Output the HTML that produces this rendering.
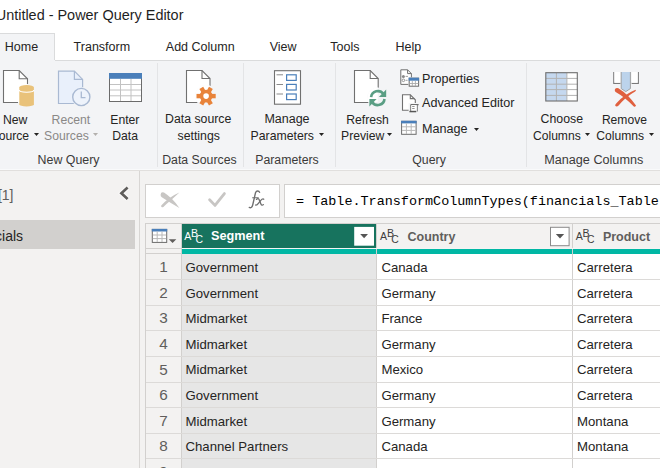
<!DOCTYPE html>
<html><head><meta charset="utf-8"><style>
html,body{margin:0;padding:0;width:660px;height:468px;overflow:hidden;position:relative;background:#f3f2f1}
</style></head><body>
<div style="position:absolute;left:0px;top:0px;width:660px;height:60px;background:#fff"></div>
<div style="position:absolute;left:-4.3px;top:8.17px;font:400 14.45px/14.45px 'Liberation Sans', sans-serif;color:#1f1f1f;white-space:pre;">Untitled - Power Query Editor</div>
<div style="position:absolute;left:-1px;top:33px;width:56px;height:28px;background:#f3f4f6;border:1px solid #dadbdc;border-bottom:none;box-sizing:border-box"></div>
<div style="position:absolute;left:4.8px;top:41.12px;font:400 12.5px/12.5px 'Liberation Sans', sans-serif;color:#252423;white-space:pre;">Home</div>
<div style="position:absolute;left:73.6px;top:41.12px;font:400 12.5px/12.5px 'Liberation Sans', sans-serif;color:#252423;white-space:pre;">Transform</div>
<div style="position:absolute;left:165.8px;top:41.12px;font:400 12.5px/12.5px 'Liberation Sans', sans-serif;color:#252423;white-space:pre;">Add Column</div>
<div style="position:absolute;left:269.7px;top:41.12px;font:400 12.5px/12.5px 'Liberation Sans', sans-serif;color:#252423;white-space:pre;">View</div>
<div style="position:absolute;left:330.3px;top:41.12px;font:400 12.5px/12.5px 'Liberation Sans', sans-serif;color:#252423;white-space:pre;">Tools</div>
<div style="position:absolute;left:395.5px;top:41.12px;font:400 12.5px/12.5px 'Liberation Sans', sans-serif;color:#252423;white-space:pre;">Help</div>
<div style="position:absolute;left:0px;top:60px;width:660px;height:109px;background:#f3f4f6"></div>
<div style="position:absolute;left:55px;top:60px;width:605px;height:1px;background:#dadbdc"></div>
<div style="position:absolute;left:0px;top:169px;width:660px;height:1px;background:#f9fafb"></div>
<div style="position:absolute;left:0px;top:170px;width:660px;height:1px;background:#e1dfdd"></div>
<div style="position:absolute;left:157px;top:63px;width:1px;height:104px;background:#e3e4e6"></div>
<div style="position:absolute;left:243px;top:63px;width:1px;height:104px;background:#e3e4e6"></div>
<div style="position:absolute;left:335px;top:63px;width:1px;height:104px;background:#e3e4e6"></div>
<div style="position:absolute;left:526px;top:63px;width:1px;height:104px;background:#e3e4e6"></div>
<!--ICONS-->
<div style="position:absolute;left:2.9px;top:113.57px;font:400 12.2px/12.2px 'Liberation Sans', sans-serif;color:#252423;white-space:pre;">New</div>
<div style="position:absolute;left:-9.5px;top:129.87px;font:400 12.2px/12.2px 'Liberation Sans', sans-serif;color:#252423;white-space:pre;">Source</div>
<div style="position:absolute;left:51.6px;top:113.57px;font:400 12.2px/12.2px 'Liberation Sans', sans-serif;color:#8a8886;white-space:pre;">Recent</div>
<div style="position:absolute;left:44.1px;top:129.87px;font:400 12.2px/12.2px 'Liberation Sans', sans-serif;color:#8a8886;white-space:pre;">Sources</div>
<div style="position:absolute;left:110.3px;top:113.57px;font:400 12.2px/12.2px 'Liberation Sans', sans-serif;color:#252423;white-space:pre;">Enter</div>
<div style="position:absolute;left:112.2px;top:129.87px;font:400 12.2px/12.2px 'Liberation Sans', sans-serif;color:#252423;white-space:pre;">Data</div>
<div style="position:absolute;left:37.6px;top:153.90px;font:400 12.4px/12.4px 'Liberation Sans', sans-serif;color:#3b3a39;white-space:pre;">New Query</div>
<div style="position:absolute;left:165px;top:113.49px;font:400 12.3px/12.3px 'Liberation Sans', sans-serif;color:#252423;white-space:pre;">Data source</div>
<div style="position:absolute;left:177.5px;top:129.79px;font:400 12.3px/12.3px 'Liberation Sans', sans-serif;color:#252423;white-space:pre;">settings</div>
<div style="position:absolute;left:162.2px;top:153.99px;font:400 12.3px/12.3px 'Liberation Sans', sans-serif;color:#3b3a39;white-space:pre;">Data Sources</div>
<div style="position:absolute;left:264.4px;top:113.32px;font:400 12.5px/12.5px 'Liberation Sans', sans-serif;color:#252423;white-space:pre;">Manage</div>
<div style="position:absolute;left:250.6px;top:129.83px;font:400 12.25px/12.25px 'Liberation Sans', sans-serif;color:#252423;white-space:pre;">Parameters</div>
<div style="position:absolute;left:255.2px;top:153.99px;font:400 12.3px/12.3px 'Liberation Sans', sans-serif;color:#3b3a39;white-space:pre;">Parameters</div>
<div style="position:absolute;left:346.2px;top:113.57px;font:400 12.2px/12.2px 'Liberation Sans', sans-serif;color:#252423;white-space:pre;">Refresh</div>
<div style="position:absolute;left:341px;top:129.87px;font:400 12.2px/12.2px 'Liberation Sans', sans-serif;color:#252423;white-space:pre;">Preview</div>
<div style="position:absolute;left:422px;top:72.53px;font:400 12.6px/12.6px 'Liberation Sans', sans-serif;color:#252423;white-space:pre;">Properties</div>
<div style="position:absolute;left:422px;top:96.73px;font:400 12.6px/12.6px 'Liberation Sans', sans-serif;color:#252423;white-space:pre;">Advanced Editor</div>
<div style="position:absolute;left:422px;top:122.53px;font:400 12.6px/12.6px 'Liberation Sans', sans-serif;color:#252423;white-space:pre;">Manage</div>
<div style="position:absolute;left:412.3px;top:153.99px;font:400 12.3px/12.3px 'Liberation Sans', sans-serif;color:#3b3a39;white-space:pre;">Query</div>
<div style="position:absolute;left:540.6px;top:113.49px;font:400 12.3px/12.3px 'Liberation Sans', sans-serif;color:#252423;white-space:pre;">Choose</div>
<div style="position:absolute;left:533px;top:129.96px;font:400 12.1px/12.1px 'Liberation Sans', sans-serif;color:#252423;white-space:pre;">Columns</div>
<div style="position:absolute;left:601.9px;top:113.66px;font:400 12.1px/12.1px 'Liberation Sans', sans-serif;color:#252423;white-space:pre;">Remove</div>
<div style="position:absolute;left:596.3px;top:129.96px;font:400 12.1px/12.1px 'Liberation Sans', sans-serif;color:#252423;white-space:pre;">Columns</div>
<div style="position:absolute;left:544.2px;top:153.69px;font:400 12.65px/12.65px 'Liberation Sans', sans-serif;color:#3b3a39;white-space:pre;">Manage Columns</div>
<svg style="position:absolute;left:33.5px;top:132.5px" width="6" height="4"><path d="M0 0H5L2.5 3Z" fill="#252423"/></svg>
<svg style="position:absolute;left:93px;top:132.5px" width="6" height="4"><path d="M0 0H5L2.5 3Z" fill="#b3b0ad"/></svg>
<svg style="position:absolute;left:318.5px;top:132.5px" width="6" height="4"><path d="M0 0H5L2.5 3Z" fill="#252423"/></svg>
<svg style="position:absolute;left:387px;top:132.5px" width="6" height="4"><path d="M0 0H5L2.5 3Z" fill="#252423"/></svg>
<svg style="position:absolute;left:473.5px;top:127.5px" width="6" height="4"><path d="M0 0H5L2.5 3Z" fill="#252423"/></svg>
<svg style="position:absolute;left:585px;top:132.5px" width="6" height="4"><path d="M0 0H5L2.5 3Z" fill="#252423"/></svg>
<svg style="position:absolute;left:649px;top:132.5px" width="6" height="4"><path d="M0 0H5L2.5 3Z" fill="#252423"/></svg>
<div style="position:absolute;left:0px;top:171px;width:139px;height:297px;background:#f3f2f1"></div>
<div style="position:absolute;left:139px;top:171px;width:1px;height:297px;background:#d8d6d4"></div>
<div style="position:absolute;left:140px;top:171px;width:520px;height:297px;background:#f3f2f1"></div>
<div style="position:absolute;left:-55px;top:187.65px;font:400 14px/14px 'Liberation Sans', sans-serif;color:#605e5c;white-space:pre;">Queries [1]</div>
<!--SIDEBAR-->
<div style="position:absolute;left:0px;top:220px;width:135px;height:29px;background:#d2d0ce"></div>
<div style="position:absolute;left:-35.3px;top:229.15px;font:400 14px/14px 'Liberation Sans', sans-serif;color:#252423;white-space:pre;">financials</div>
<div style="position:absolute;left:145px;top:184px;width:135px;height:34px;background:#fff;border:1px solid #d2d0ce;box-sizing:border-box"></div>
<div style="position:absolute;left:284px;top:184px;width:380px;height:34px;background:#fff;border:1px solid #d2d0ce;box-sizing:border-box"></div>
<!--FX-->
<div style="position:absolute;left:296px;top:195.12px;font:400 13.44px/13.44px 'Liberation Mono', monospace;color:#000;white-space:pre;">= Table.TransformColumnTypes(financials_Table</div>
<div style="position:absolute;left:145px;top:223px;width:515px;height:1px;background:#d2d0ce"></div>
<div style="position:absolute;left:145px;top:223px;width:1px;height:245px;background:#d2d0ce"></div>
<div style="position:absolute;left:146px;top:224px;width:35px;height:24px;background:#f3f2f1"></div>
<div style="position:absolute;left:146px;top:248px;width:35px;height:1px;background:#d2d0ce"></div>
<div style="position:absolute;left:146px;top:249px;width:35px;height:5px;background:#f3f2f1"></div>
<div style="position:absolute;left:146px;top:253px;width:35px;height:1px;background:#d2d0ce"></div>
<div style="position:absolute;left:181px;top:224px;width:1px;height:244px;background:#d2d0ce"></div>
<div style="position:absolute;left:182px;top:224px;width:194px;height:24px;background:#17735e"></div>
<div style="position:absolute;left:376px;top:224px;width:1px;height:244px;background:#d2d0ce"></div>
<div style="position:absolute;left:377px;top:224px;width:195px;height:24px;background:#f3f2f1"></div>
<div style="position:absolute;left:572px;top:224px;width:1px;height:244px;background:#d2d0ce"></div>
<div style="position:absolute;left:573px;top:224px;width:87px;height:24px;background:#f3f2f1"></div>
<div style="position:absolute;left:182px;top:248px;width:478px;height:1px;background:#f4f4f4"></div>
<div style="position:absolute;left:182px;top:249px;width:194px;height:5px;background:#00b7a4"></div>
<div style="position:absolute;left:377px;top:249px;width:195px;height:5px;background:#00b7a4"></div>
<div style="position:absolute;left:573px;top:249px;width:87px;height:5px;background:#00b7a4"></div>
<div style="position:absolute;left:146px;top:254px;width:35px;height:214px;background:#f3f2f1"></div>
<div style="position:absolute;left:182px;top:254px;width:194px;height:214px;background:#e6e6e6"></div>
<div style="position:absolute;left:377px;top:254px;width:195px;height:214px;background:#fff"></div>
<div style="position:absolute;left:573px;top:254px;width:87px;height:214px;background:#fff"></div>
<div style="position:absolute;left:13.5px;width:300px;text-align:center;top:259.25px;font:400 15.3px/15.3px 'Liberation Sans', sans-serif;color:#605e5c;white-space:pre;">1</div>
<div style="position:absolute;left:185.5px;top:260.93px;font:400 13.2px/13.2px 'Liberation Sans', sans-serif;color:#252423;white-space:pre;">Government</div>
<div style="position:absolute;left:381.4px;top:260.93px;font:400 13.2px/13.2px 'Liberation Sans', sans-serif;color:#252423;white-space:pre;">Canada</div>
<div style="position:absolute;left:577px;top:260.93px;font:400 13.2px/13.2px 'Liberation Sans', sans-serif;color:#252423;white-space:pre;">Carretera</div>
<div style="position:absolute;left:146px;top:279px;width:514px;height:1px;background:#dcdad8"></div>
<div style="position:absolute;left:13.5px;width:300px;text-align:center;top:284.85px;font:400 15.3px/15.3px 'Liberation Sans', sans-serif;color:#605e5c;white-space:pre;">2</div>
<div style="position:absolute;left:185.5px;top:286.53px;font:400 13.2px/13.2px 'Liberation Sans', sans-serif;color:#252423;white-space:pre;">Government</div>
<div style="position:absolute;left:381.4px;top:286.53px;font:400 13.2px/13.2px 'Liberation Sans', sans-serif;color:#252423;white-space:pre;">Germany</div>
<div style="position:absolute;left:577px;top:286.53px;font:400 13.2px/13.2px 'Liberation Sans', sans-serif;color:#252423;white-space:pre;">Carretera</div>
<div style="position:absolute;left:146px;top:305px;width:514px;height:1px;background:#dcdad8"></div>
<div style="position:absolute;left:13.5px;width:300px;text-align:center;top:310.45px;font:400 15.3px/15.3px 'Liberation Sans', sans-serif;color:#605e5c;white-space:pre;">3</div>
<div style="position:absolute;left:185.5px;top:312.13px;font:400 13.2px/13.2px 'Liberation Sans', sans-serif;color:#252423;white-space:pre;">Midmarket</div>
<div style="position:absolute;left:381.4px;top:312.13px;font:400 13.2px/13.2px 'Liberation Sans', sans-serif;color:#252423;white-space:pre;">France</div>
<div style="position:absolute;left:577px;top:312.13px;font:400 13.2px/13.2px 'Liberation Sans', sans-serif;color:#252423;white-space:pre;">Carretera</div>
<div style="position:absolute;left:146px;top:330px;width:514px;height:1px;background:#dcdad8"></div>
<div style="position:absolute;left:13.5px;width:300px;text-align:center;top:336.05px;font:400 15.3px/15.3px 'Liberation Sans', sans-serif;color:#605e5c;white-space:pre;">4</div>
<div style="position:absolute;left:185.5px;top:337.73px;font:400 13.2px/13.2px 'Liberation Sans', sans-serif;color:#252423;white-space:pre;">Midmarket</div>
<div style="position:absolute;left:381.4px;top:337.73px;font:400 13.2px/13.2px 'Liberation Sans', sans-serif;color:#252423;white-space:pre;">Germany</div>
<div style="position:absolute;left:577px;top:337.73px;font:400 13.2px/13.2px 'Liberation Sans', sans-serif;color:#252423;white-space:pre;">Carretera</div>
<div style="position:absolute;left:146px;top:356px;width:514px;height:1px;background:#dcdad8"></div>
<div style="position:absolute;left:13.5px;width:300px;text-align:center;top:361.65px;font:400 15.3px/15.3px 'Liberation Sans', sans-serif;color:#605e5c;white-space:pre;">5</div>
<div style="position:absolute;left:185.5px;top:363.33px;font:400 13.2px/13.2px 'Liberation Sans', sans-serif;color:#252423;white-space:pre;">Midmarket</div>
<div style="position:absolute;left:381.4px;top:363.33px;font:400 13.2px/13.2px 'Liberation Sans', sans-serif;color:#252423;white-space:pre;">Mexico</div>
<div style="position:absolute;left:577px;top:363.33px;font:400 13.2px/13.2px 'Liberation Sans', sans-serif;color:#252423;white-space:pre;">Carretera</div>
<div style="position:absolute;left:146px;top:382px;width:514px;height:1px;background:#dcdad8"></div>
<div style="position:absolute;left:13.5px;width:300px;text-align:center;top:387.25px;font:400 15.3px/15.3px 'Liberation Sans', sans-serif;color:#605e5c;white-space:pre;">6</div>
<div style="position:absolute;left:185.5px;top:388.93px;font:400 13.2px/13.2px 'Liberation Sans', sans-serif;color:#252423;white-space:pre;">Government</div>
<div style="position:absolute;left:381.4px;top:388.93px;font:400 13.2px/13.2px 'Liberation Sans', sans-serif;color:#252423;white-space:pre;">Germany</div>
<div style="position:absolute;left:577px;top:388.93px;font:400 13.2px/13.2px 'Liberation Sans', sans-serif;color:#252423;white-space:pre;">Carretera</div>
<div style="position:absolute;left:146px;top:407px;width:514px;height:1px;background:#dcdad8"></div>
<div style="position:absolute;left:13.5px;width:300px;text-align:center;top:412.85px;font:400 15.3px/15.3px 'Liberation Sans', sans-serif;color:#605e5c;white-space:pre;">7</div>
<div style="position:absolute;left:185.5px;top:414.53px;font:400 13.2px/13.2px 'Liberation Sans', sans-serif;color:#252423;white-space:pre;">Midmarket</div>
<div style="position:absolute;left:381.4px;top:414.53px;font:400 13.2px/13.2px 'Liberation Sans', sans-serif;color:#252423;white-space:pre;">Germany</div>
<div style="position:absolute;left:577px;top:414.53px;font:400 13.2px/13.2px 'Liberation Sans', sans-serif;color:#252423;white-space:pre;">Montana</div>
<div style="position:absolute;left:146px;top:433px;width:514px;height:1px;background:#dcdad8"></div>
<div style="position:absolute;left:13.5px;width:300px;text-align:center;top:438.45px;font:400 15.3px/15.3px 'Liberation Sans', sans-serif;color:#605e5c;white-space:pre;">8</div>
<div style="position:absolute;left:185.5px;top:440.13px;font:400 13.2px/13.2px 'Liberation Sans', sans-serif;color:#252423;white-space:pre;">Channel Partners</div>
<div style="position:absolute;left:381.4px;top:440.13px;font:400 13.2px/13.2px 'Liberation Sans', sans-serif;color:#252423;white-space:pre;">Canada</div>
<div style="position:absolute;left:577px;top:440.13px;font:400 13.2px/13.2px 'Liberation Sans', sans-serif;color:#252423;white-space:pre;">Montana</div>
<div style="position:absolute;left:146px;top:458px;width:514px;height:1px;background:#dcdad8"></div>
<div style="position:absolute;left:13.5px;width:300px;text-align:center;top:464.05px;font:400 15.3px/15.3px 'Liberation Sans', sans-serif;color:#605e5c;white-space:pre;">9</div>
<div style="position:absolute;left:211px;top:230.25px;font:700 12.7px/12.7px 'Liberation Sans', sans-serif;color:#fff;white-space:pre;">Segment</div>
<div style="position:absolute;left:407.5px;top:230.72px;font:700 12.5px/12.5px 'Liberation Sans', sans-serif;color:#605e5c;white-space:pre;">Country</div>
<div style="position:absolute;left:602.9px;top:230.72px;font:700 12.5px/12.5px 'Liberation Sans', sans-serif;color:#605e5c;white-space:pre;">Product</div>
<svg style="position:absolute;left:0;top:0" width="660" height="468" viewBox="0 0 660 468"><path d="M3.5 70.5H19.2L27.5 78.8V102.5H3.5Z" fill="#fff" stroke="#707070" stroke-width="1.1" stroke-linejoin="miter"/><path d="M19.2 70.5V78.8H27.5" fill="none" stroke="#707070" stroke-width="1.1"/><defs><clipPath id="cp1"><rect x="4" y="79" width="23" height="23"/></clipPath><clipPath id="cp2"><rect x="187" y="79" width="22.5" height="23"/></clipPath><clipPath id="cp3"><rect x="355" y="79" width="22.7" height="23"/></clipPath><clipPath id="cp4"><rect x="59" y="79" width="23" height="24"/></clipPath></defs><path d="M18 84H35.5V108H18Z" fill="#f3f4f6"/><path d="M18 84H35.5V108H18Z" fill="#fff" clip-path="url(#cp1)"/><path d="M19.3 87.3V104.2A7.3 2.3 0 0 0 33.9 104.2V87.3Z" fill="#e9c27a"/><ellipse cx="26.6" cy="87.3" rx="7.3" ry="2.2" fill="#e9c27a"/><path d="M19.3 90A7.3 2.2 0 0 0 33.9 90" fill="none" stroke="#fff" stroke-width="1.1"/><path d="M58.5 71.2H74.39999999999999L82.6 79.4V103.5H58.5Z" fill="#e9f0fb" stroke="#a9b9d2" stroke-width="1.2" stroke-linejoin="miter"/><path d="M74.39999999999999 71.2V79.4H82.6" fill="none" stroke="#a9b9d2" stroke-width="1.2"/><circle cx="81.3" cy="97" r="10" fill="#f3f4f6"/><circle cx="81.3" cy="97" r="10" fill="#e9f0fb" clip-path="url(#cp4)"/><circle cx="81.3" cy="97" r="8.6" fill="#eef3fb" stroke="#a9b9d2" stroke-width="1.4"/><path d="M81.3 91.5V97.6H85.5" fill="none" stroke="#a9b9d2" stroke-width="1.3"/><rect x="109.5" y="73.5" width="32" height="28" fill="#fff" stroke="#6b6b6b" stroke-width="1"/><rect x="109" y="73" width="33" height="5.8" fill="#4a7fba"/><path d="M120.5 79V101M131 79V101M110 84.5H141M110 90H141M110 95.8H141" stroke="#c2c2c2" stroke-width="1"/><path d="M186.5 70.5H202L210 78.5V102.5H186.5Z" fill="#fff" stroke="#707070" stroke-width="1.1" stroke-linejoin="miter"/><path d="M202 70.5V78.5H210" fill="none" stroke="#707070" stroke-width="1.1"/><circle cx="206.1" cy="96.1" r="11" fill="#f3f4f6"/><circle cx="206.1" cy="96.1" r="11" fill="#fff" clip-path="url(#cp2)"/><rect x="-2.2" y="-9.6" width="4.4" height="6" transform="translate(206.1 96.1) rotate(90)" fill="#e8833a"/><rect x="-2.2" y="-9.6" width="4.4" height="6" transform="translate(206.1 96.1) rotate(150)" fill="#e8833a"/><rect x="-2.2" y="-9.6" width="4.4" height="6" transform="translate(206.1 96.1) rotate(210)" fill="#e8833a"/><rect x="-2.2" y="-9.6" width="4.4" height="6" transform="translate(206.1 96.1) rotate(270)" fill="#e8833a"/><rect x="-2.2" y="-9.6" width="4.4" height="6" transform="translate(206.1 96.1) rotate(330)" fill="#e8833a"/><rect x="-2.2" y="-9.6" width="4.4" height="6" transform="translate(206.1 96.1) rotate(390)" fill="#e8833a"/><circle cx="206.1" cy="96.1" r="4.6" fill="none" stroke="#e8833a" stroke-width="3.6"/><rect x="274.5" y="70.7" width="26" height="33.5" fill="#fff" stroke="#707070" stroke-width="1.1"/><path d="M276.5 74.8H283M276.5 84.5H283M276.5 94H283" stroke="#8a8a8a" stroke-width="1"/><rect x="286.6" y="74.8" width="9.6" height="5.6" fill="#fff" stroke="#4a7fba" stroke-width="1.2"/><rect x="286.6" y="84.4" width="9.6" height="5.6" fill="#fff" stroke="#4a7fba" stroke-width="1.2"/><rect x="286.6" y="94" width="9.6" height="5.6" fill="#fff" stroke="#4a7fba" stroke-width="1.2"/><path d="M354.5 70.5H370.2L378.2 78.5V102.5H354.5Z" fill="#fff" stroke="#707070" stroke-width="1.1" stroke-linejoin="miter"/><path d="M370.2 70.5V78.5H378.2" fill="none" stroke="#707070" stroke-width="1.1"/><circle cx="377.7" cy="98" r="10.5" fill="#f3f4f6"/><circle cx="377.7" cy="98" r="10.5" fill="#fff" clip-path="url(#cp3)"/><path d="M371.1 97.2A6.8 6.8 0 0 1 383.4 94" fill="none" stroke="#5a9e84" stroke-width="2.6"/><path d="M386.2 89.6V97.1H378.9Z" fill="#5a9e84"/><path d="M384.5 99A6.8 6.8 0 0 1 372.3 102.4" fill="none" stroke="#5a9e84" stroke-width="2.6"/><path d="M369.4 99.1H376.6L369.4 106.5Z" fill="#5a9e84"/><path d="M400.8 69.8H407.6L411.4 73.6V84.4H400.8Z" fill="#fff" stroke="#707070" stroke-width="1"/><path d="M407.6 69.8V73.6H411.4" fill="none" stroke="#707070" stroke-width="1"/><circle cx="403.4" cy="76.4" r="1.5" fill="#8a8a8a"/><circle cx="403.4" cy="80.3" r="1.3" fill="none" stroke="#8a8a8a" stroke-width="0.9"/><path d="M405.6 76.4H408M405.6 80.3H407.6" stroke="#999" stroke-width="0.9"/><rect x="408.3" y="77.3" width="11" height="9.7" fill="#f3f4f6"/><rect x="409.2" y="78.2" width="9.4" height="8" fill="#fff" stroke="#6b6b6b" stroke-width="1"/><rect x="408.7" y="77.7" width="10.4" height="3" fill="#4a7fba"/><path d="M412.3 81V86M415.4 81V86M409.5 83.5H418.3" stroke="#aaa" stroke-width="0.9"/><path d="M402.5 94.8H410.3L415.3 99.8V110.2H402.5Z" fill="#fff" stroke="#707070" stroke-width="1.1"/><path d="M410.3 94.8V98.6H414.5" fill="none" stroke="#707070" stroke-width="1.1"/><rect x="408.6" y="103" width="11" height="10.5" fill="#f3f4f6"/><path d="M410.8 104.6H418.6M417.2 104.6V111.6M410.8 104.6V111.2" fill="none" stroke="#6e6e6e" stroke-width="1.1"/><rect x="411.3" y="105.1" width="5.4" height="5.8" fill="#fff"/><path d="M412.2 106.5H414.6M412.2 108.5H414.6" stroke="#888" stroke-width="0.9"/><path d="M409.4 110.8H416.2V112.3H409.4Z" fill="#555"/><rect x="401.6" y="121.3" width="14.5" height="13" fill="#fff" stroke="#6b6b6b" stroke-width="1"/><rect x="401.1" y="120.8" width="15.5" height="2.6" fill="#4a7fba"/><path d="M406.4 123.4V134M411.2 123.4V134M402 126.8H415.6M402 130.4H415.6" stroke="#b8b8b8" stroke-width="1"/><rect x="545.8" y="72.7" width="21.1" height="28.3" fill="#c5d8ef"/><rect x="566.9" y="72.7" width="10.4" height="28.3" fill="#fff"/><path d="M556.4 73V101M566.9 73V101M546 78.4H577.5M546 84.2H577.5M546 89.6H577.5M546 95.4H577.5" stroke="#b2b2b2" stroke-width="1"/><rect x="545.8" y="72.7" width="31.5" height="28.3" fill="none" stroke="#6e6e6e" stroke-width="1.1"/><path d="M613.8 72V83.4H620.5M638.3 72V83.4H631.6" fill="none" stroke="#7a7a7a" stroke-width="1.2"/><rect x="614.4" y="72" width="6" height="10.8" fill="#fff"/><rect x="631.8" y="72" width="5.9" height="10.8" fill="#fff"/><path d="M621.2 72V88.6L625.8 91.6L630.4 88.6V72" fill="#bcd3eb" stroke="#9a9a9a" stroke-width="0.9"/><path d="M614.8 90.6Q614.6 87.4 618.4 88.2Q628.5 94.5 636 105.6Q635.6 107.2 633.8 106.4Q624 96.5 616 92.2Q614.9 91.6 614.8 90.6Z" fill="#e0603f"/><path d="M635.6 89.8Q636.4 90.6 635.2 91.4Q625.5 96.8 618.6 105.6Q616.6 107.4 615.2 105.8Q615 104.6 616.4 103.2Q624.5 94.2 635.6 89.8Z" fill="#e0603f"/><path d="M160.6 194.8Q160.8 191.6 164 192.6Q172.5 198 179.4 208Q171.5 203.5 161.8 197.2Q160.5 196.4 160.6 194.8Z" fill="#c8c6c4"/><path d="M179.4 192.4Q174 194.5 168.5 198.8Q164 202.4 161.2 205.4Q160.8 208 163.4 207Q166.6 203.6 170.6 200.4Q175 196.5 179.4 192.4Z" fill="#c8c6c4"/><path d="M209.6 199.8L215 205.4L224.4 193.6" fill="none" stroke="#c8c6c4" stroke-width="2.8" stroke-linecap="round" stroke-linejoin="round"/><path d="M127.6 187.6L121.4 193.3L127.6 199" fill="none" stroke="#fff" stroke-opacity="0.7" stroke-width="4.6"/><path d="M127.6 187.6L121.4 193.3L127.6 199" fill="none" stroke="#5f5d5b" stroke-width="2.7"/><rect x="152.3" y="229.4" width="14.4" height="13" fill="#fff" stroke="#6b6b6b" stroke-width="1"/><rect x="151.8" y="228.9" width="15.4" height="2.6" fill="#4a7fba"/><path d="M157.2 231.5V242M162 231.5V242M152.8 235H166.2M152.8 238.6H166.2" stroke="#b8b8b8" stroke-width="1"/><path d="M168.8 239.2H176.3L172.55 243Z" fill="#605e5c"/><rect x="354.2" y="226.9" width="19.8" height="18.8" fill="#fff"/><path d="M360.2 234H368L364.1 238.3Z" fill="#555"/><rect x="550.5" y="227.3" width="18.6" height="18.4" fill="#fff" stroke="#8a8a8a" stroke-width="1"/><path d="M555.8 234H564.2L560 238.4Z" fill="#555"/></svg>
<div style="position:absolute;left:184.3px;top:230.63px;font:400 10.6px/10.6px 'Liberation Sans', sans-serif;color:#fff;white-space:pre;">A</div>
<div style="position:absolute;left:191.10000000000002px;top:228.23px;font:400 10.6px/10.6px 'Liberation Sans', sans-serif;color:#fff;white-space:pre;">B</div>
<div style="position:absolute;left:195.5px;top:235.10px;font:400 10.4px/10.4px 'Liberation Sans', sans-serif;color:#fff;white-space:pre;">C</div>
<div style="position:absolute;left:380.1px;top:230.63px;font:400 10.6px/10.6px 'Liberation Sans', sans-serif;color:#3e3e3e;white-space:pre;">A</div>
<div style="position:absolute;left:386.90000000000003px;top:228.23px;font:400 10.6px/10.6px 'Liberation Sans', sans-serif;color:#3e3e3e;white-space:pre;">B</div>
<div style="position:absolute;left:391.3px;top:235.10px;font:400 10.4px/10.4px 'Liberation Sans', sans-serif;color:#3e3e3e;white-space:pre;">C</div>
<div style="position:absolute;left:575.8px;top:230.63px;font:400 10.6px/10.6px 'Liberation Sans', sans-serif;color:#3e3e3e;white-space:pre;">A</div>
<div style="position:absolute;left:582.5999999999999px;top:228.23px;font:400 10.6px/10.6px 'Liberation Sans', sans-serif;color:#3e3e3e;white-space:pre;">B</div>
<div style="position:absolute;left:587.0px;top:235.10px;font:400 10.4px/10.4px 'Liberation Sans', sans-serif;color:#3e3e3e;white-space:pre;">C</div>
<svg style="position:absolute;left:0;top:0" width="660" height="468"><g fill="none" stroke="#6e6e6e" stroke-linecap="round"><path d="M259.6 192.4C259 190.6 256.4 190.2 255.5 192.8L252.7 205C252.1 207.6 250.6 208.2 249.3 207.4" stroke-width="1.35"/><path d="M252.6 197.7H258.3" stroke-width="1.1"/><path d="M256.4 199.4C258.2 197.8 259 199 259.6 200.8L260.8 203.8C261.4 205.4 262.4 205.6 263.4 204.6" stroke-width="1.3"/><path d="M263.8 199.2C262.8 198.4 262 199 260.6 200.6L258.8 202.8C257.6 204.4 256.6 205.6 255.6 205" stroke-width="1.3"/></g></svg>
</body></html>
